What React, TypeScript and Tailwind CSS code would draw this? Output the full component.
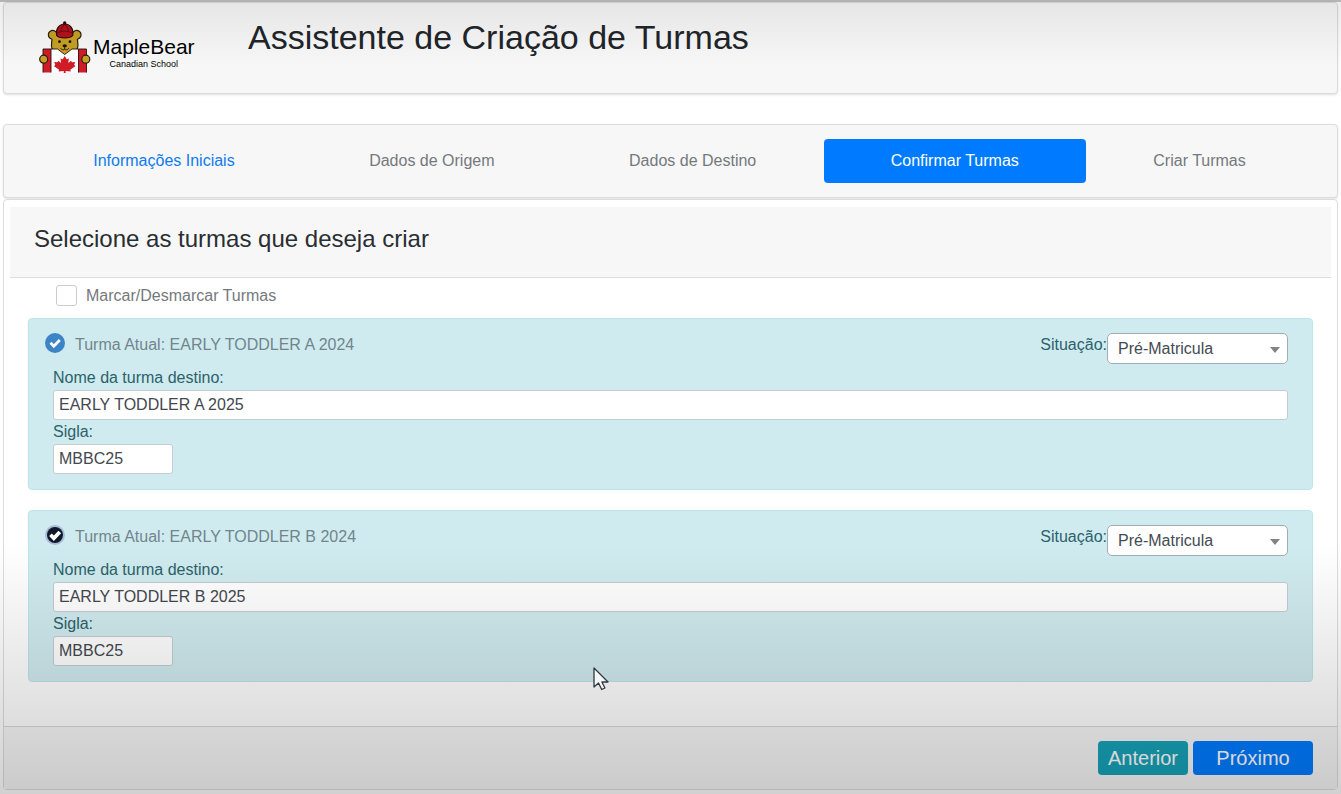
import { useState } from "react";

const STEPS = [
  { label: "Informações Iniciais", state: "done" },
  { label: "Dados de Origem", state: "idle" },
  { label: "Dados de Destino", state: "idle" },
  { label: "Confirmar Turmas", state: "active" },
  { label: "Criar Turmas", state: "idle" },
];

const STEP_STYLES: Record<string, string> = {
  done: "text-[#0f7bf0]",
  idle: "text-[#75797d]",
  active: "bg-[#007bff] text-white",
};

const CLASSES = [
  { id: "a", current: "EARLY TODDLER A 2024", target: "EARLY TODDLER A 2025", code: "MBBC25", focused: false },
  { id: "b", current: "EARLY TODDLER B 2024", target: "EARLY TODDLER B 2025", code: "MBBC25", focused: true },
];

function BearLogo() {
  return (
    <svg viewBox="0 0 52 52" className="h-[52px] w-[52px] shrink-0" aria-hidden="true">
      <path
        d="M17 11c-1.500-1.600-4-2-5.800-.8-2.400 1.600-2.400 5-.4 6.800.8.800 1.700 1 2.200 1.300-.3 2.500-.6 4.500-.5 7 .2 2 .8 3.200 2 4.200l4 1.500 7.200 3.500 7.200-3.500 4-1.500c1.200-1 1.800-2.200 2-4.200.1-2.500-.2-4.500-.5-7 .5-.3 1.400-.5 2.200-1.300 2-1.800 2-5.200-.4-6.800-1.800-1.200-4.300-.8-5.800.8z"
        fill="#c6a025"
        stroke="#2a1e08"
        strokeWidth="1.2"
        strokeLinejoin="round"
      />
      <path d="M17.700 14.500C16.500 8 20 3 25.700 3s9.200 5 8 11.500c-1.500 2-4.500 2.500-8 2.500s-6.500-.5-8-2.500z" fill="#b3121d" stroke="#2a0a08" strokeWidth="1.200" />
      <path d="M18 12c4.500-2.400 11-2.400 15.400 0M22 11c0-3.500 1.500-6 3.700-7.500 2.200 1.500 3.700 4 3.700 7.500" fill="none" stroke="#6d0a12" strokeWidth="1" />
      <circle cx="25.700" cy="2" r="1.700" fill="#2a0a08" />
      <circle cx="20.500" cy="20.700" r="1.400" fill="#1c1408" />
      <circle cx="31" cy="20.700" r="1.400" fill="#1c1408" />
      <ellipse cx="25.700" cy="24.800" rx="2.200" ry="1.500" fill="#1c1408" />
      <path d="M25.700 26v2.200m-4-.9c1 1.800 3 1.800 4 .9 1 .9 3 .9 4-.9" fill="none" stroke="#2a1e08" strokeWidth="1" />
      <path d="M4 28h14.500l7.200 5.500L33 28h14.500v23.500H4z" fill="#fff" />
      <path d="M4 28h8v23.500H4zM39.500 28h8v23.500h-8z" fill="#d01c26" />
      <path d="M4 51.500V28h14.500l7.200 5.500L33 28h14.500v23.500M12 28v23.500M39.500 28v23.500" fill="none" stroke="#2a1010" strokeWidth="0.900" />
      <path
        d="M25.700 35l2 3.300 2.200-.9-.6 4.600 2.700-2.300 1 1.600 3.200-.4-1.100 3 1.500 1-5.300 3.800.5 1.700-5.200-.5.100 2.100h-2l.1-2.100-5.200.5.500-1.700-5.300-3.800 1.500-1-1.100-3 3.200.4 1-1.600 2.700 2.300-.6-4.600 2.200.9z"
        fill="#d01c26"
      />
      <g fill="#c6a025" stroke="#2a1e08" strokeWidth="1.200">
        <circle cx="4.700" cy="38.200" r="4" />
        <circle cx="46.800" cy="38.200" r="4" />
      </g>
    </svg>
  );
}

function RoundCheck({ id, focused }: { id: string; focused: boolean }) {
  return (
    <span className="grid size-5 shrink-0 place-items-center">
      <input
        id={id}
        type="checkbox"
        defaultChecked
        className={
          focused
            ? "peer size-4 appearance-none rounded-full bg-[#10182c] ring-2 ring-[#a9bdd6] [grid-area:1/1]"
            : "peer size-5 appearance-none rounded-full bg-[#3d84c6] [grid-area:1/1]"
        }
      />
      <svg
        viewBox="0 0 20 20"
        className="pointer-events-none invisible size-5 [grid-area:1/1] peer-checked:visible"
        fill="none"
        stroke="#fff"
        strokeWidth={focused ? 3.8 : 2.8}
        aria-hidden="true"
      >
        <path d="M5.500 9.800l3.300 3.400 6-6.200" />
      </svg>
    </span>
  );
}

function ClassCard({ item }: { item: (typeof CLASSES)[number] }) {
  return (
    <section className="rounded border border-[#bee5e5] bg-[#d0ebef] px-6 pt-[14px] pb-[15px] text-[#2b6269]">
      <div className="flex h-[33px] items-start justify-between">
        <div className="-ml-2 flex items-start gap-[10px]">
          <RoundCheck id={`check-${item.id}`} focused={item.focused} />
          <label htmlFor={`check-${item.id}`} className="leading-6 text-[#71858c]">
            Turma Atual: {item.current}
          </label>
        </div>
        <div className="flex items-start">
          <label htmlFor={`status-${item.id}`} className="leading-6">
            Situação:
          </label>
          <span className="grid w-[181px] items-center">
            <select
              id={`status-${item.id}`}
              className="h-[31px] w-full appearance-none rounded-[5px] border border-[#a5abb3] bg-white pl-[10px] text-[#444b52] [grid-area:1/1]"
            >
              <option>Pré-Matricula</option>
            </select>
            <svg viewBox="0 0 10 6" className="pointer-events-none mt-[3px] mr-2 h-[6px] w-[10px] justify-self-end [grid-area:1/1]" aria-hidden="true">
              <path d="M0 0h10L5 6z" fill="#808488" />
            </svg>
          </span>
        </div>
      </div>
      <label htmlFor={`name-${item.id}`} className="block leading-6">
        Nome da turma destino:
      </label>
      <input
        id={`name-${item.id}`}
        defaultValue={item.target}
        className="block h-[30px] w-full rounded-[3px] border border-[#c3ccd1] bg-white px-[5px] text-[#43484e]"
      />
      <label htmlFor={`code-${item.id}`} className="block leading-6">
        Sigla:
      </label>
      <input
        id={`code-${item.id}`}
        defaultValue={item.code}
        className="block h-[30px] w-[120px] rounded-[3px] border border-[#c3ccd1] bg-white px-[5px] text-[#43484e]"
      />
    </section>
  );
}

export default function App() {
  const [all, setAll] = useState(false);
  return (
    <div className="relative min-h-screen border-t-2 border-[#b4b4b4] bg-white px-[3px] pb-1 font-['Liberation_Sans',Arial,sans-serif] text-base">
      <header className="flex h-[92px] items-start rounded border border-[#dcdcdc] bg-[#f7f7f7] pt-[18px] pl-[35px] shadow-sm">
        <div className="flex w-[209px] items-start gap-[2px]">
          <BearLogo />
          <div className="flex flex-col items-center pt-[14px] text-black">
            <span className="text-[21px] leading-6">MapleBear</span>
            <span className="text-[9px] leading-[10px]">Canadian School</span>
          </div>
        </div>
        <h1 className="text-[34px] leading-8 text-[#212529]">Assistente de Criação de Turmas</h1>
      </header>

      <nav className="mt-[30px] rounded border border-[#dcdcdc] bg-[#f7f7f7] py-[14px] pr-6 pl-[22px] shadow-sm" aria-label="Etapas">
        <ul className="flex">
          {STEPS.map((step) => (
            <li key={step.label} className="flex-auto text-center">
              <a
                href="#"
                aria-current={step.state === "active" ? "step" : undefined}
                className={`block rounded px-4 py-[10px] leading-6 ${STEP_STYLES[step.state]}`}
              >
                {step.label}
              </a>
            </li>
          ))}
        </ul>
      </nav>

      <main className="mt-px rounded border border-[#dcdcdc] bg-white">
        <div className="mx-[6px] mt-[7px] border-b border-[#dedede] bg-[#f7f7f7] px-6 pt-4 pb-[22px]">
          <h2 className="text-2xl leading-8 text-[#2a2e33]">Selecione as turmas que deseja criar</h2>
        </div>
        <div className="px-6 pb-[44px]">
          <div className="flex h-10 items-start gap-[9px] pt-[7px] pl-7">
            <input
              id="toggle-all"
              type="checkbox"
              checked={all}
              onChange={(event) => setAll(event.target.checked)}
              className="size-[21px] appearance-none rounded-[3px] border border-[#c9cdd2] bg-white checked:bg-[#007bff]"
            />
            <label htmlFor="toggle-all" className="leading-[22px] text-[#75797d]">
              Marcar/Desmarcar Turmas
            </label>
          </div>
          <div className="flex flex-col gap-5">
            {CLASSES.map((item) => (
              <ClassCard key={item.id} item={item} />
            ))}
          </div>
        </div>
        <footer className="flex justify-end gap-[5px] border-t border-[#d8d8d8] bg-[#f7f7f7] px-6 pt-[14px] pb-[14px] text-xl text-white">
          <button type="button" className="h-[34px] w-[90px] rounded bg-[#17a2b8]">
            Anterior
          </button>
          <button type="button" className="h-[34px] w-[120px] rounded bg-[#007bff]">
            Próximo
          </button>
        </footer>
      </main>

      <div className="pointer-events-none absolute inset-x-0 top-0 h-16 bg-linear-to-b from-black/7 to-transparent" />
      <div className="pointer-events-none absolute inset-x-0 bottom-0 h-[250px] bg-linear-to-b from-transparent to-black/18" />
      <svg viewBox="0 0 16 24" className="pointer-events-none absolute top-[665px] left-[593px] h-6 w-4" aria-hidden="true">
        <path d="M1 1v19l4.500-4 3.200 6.500 3.200-1.500-3-6H15z" fill="#f4f6f7" stroke="#30393f" strokeWidth="1.300" strokeLinejoin="round" />
      </svg>
    </div>
  );
}
